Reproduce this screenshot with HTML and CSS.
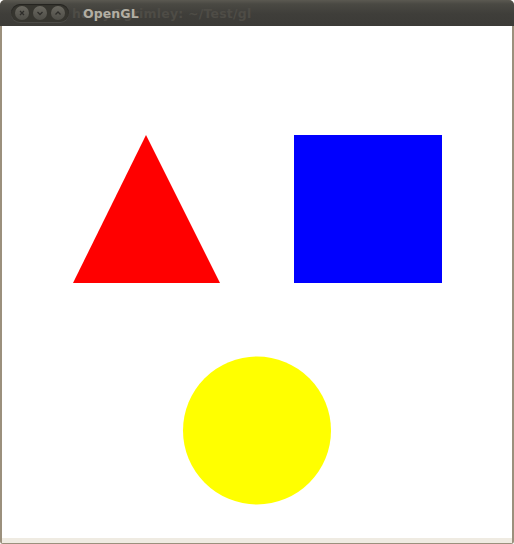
FILE: index.html
```html
<!DOCTYPE html>
<html>
<head>
<meta charset="utf-8">
<link rel="stylesheet" href="styles.css">
</head>
<body>
<div class="window">
  <div class="titlebar">
    <div class="buttons">
      <span class="btn">
        <svg width="14" height="14" viewBox="0 0 14 14"><path d="M5 5 L9 9 M9 5 L5 9" stroke="#2e2d2a" stroke-width="1.3" fill="none"/></svg>
      </span>
      <span class="btn">
        <svg width="14" height="14" viewBox="0 0 14 14"><path d="M4.5 6 L7 8.5 L9.5 6" stroke="#2e2d2a" stroke-width="1.3" fill="none"/></svg>
      </span>
      <span class="btn">
        <svg width="14" height="14" viewBox="0 0 14 14"><path d="M4.5 8.5 L7 6 L9.5 8.5" stroke="#2e2d2a" stroke-width="1.3" fill="none"/></svg>
      </span>
    </div>
    <span class="ghost">harry@grimley: ~/Test/gl</span>
    <span class="title">OpenGL</span>
  </div>
  <div class="content">
    <svg class="canvas" width="510" height="512" viewBox="0 0 510 512">
      <polygon points="144,109 218,257 71,257" fill="#ff0000"/>
      <rect x="292" y="109" width="148" height="148" fill="#0000ff"/>
      <circle cx="255" cy="404.5" r="74" fill="#ffff00"/>
    </svg>
  </div>
  <div class="footer"></div>
</div>
</body>
</html>
```
FILE: styles.css
```css
html, body {
  margin: 0;
  padding: 0;
  background: #ffffff;
}
.window {
  width: 514px;
  height: 544px;
  display: flex;
  flex-direction: column;
  box-sizing: border-box;
  background: #9b907d;
  border-radius: 5px 5px 3px 3px;
  overflow: hidden;
}
.titlebar {
  position: relative;
  height: 26px;
  flex: none;
  display: flex;
  align-items: center;
  background: linear-gradient(#5b5951 0px, #4a4943 4px, #3f3e3a 14px, #3c3b37 26px);
  font-family: "DejaVu Sans", sans-serif;
  font-weight: bold;
  font-size: 12.5px;
}
.buttons {
  margin-left: 11px;
  width: 58px;
  height: 18px;
  border-radius: 9px;
  background: #36352f;
  box-shadow: inset 0 1px 1px rgba(0,0,0,0.35), 0 1px 0 rgba(255,255,255,0.08);
  display: flex;
  align-items: center;
  justify-content: space-around;
  padding: 0 2px;
  box-sizing: border-box;
  position: relative;
  z-index: 1;
}
.btn {
  width: 14px;
  height: 14px;
  border-radius: 50%;
  background: linear-gradient(#6a6860, #4e4d47);
  display: block;
}
.btn svg {
  display: block;
}
.ghost {
  position: absolute;
  left: 72px;
  top: 6px;
  color: #4e4c46;
  letter-spacing: 0.2px;
}
.title {
  position: relative;
  margin-left: 14px;
  color: #b3aea3;
  letter-spacing: 0.1px;
}
.content {
  flex: none;
  height: 512px;
  margin: 0 2px;
  background: #ffffff;
}
.canvas {
  display: block;
}
.footer {
  flex: none;
  height: 5px;
  margin: 0 2px 1px 2px;
  background: #efebe2;
}
```
